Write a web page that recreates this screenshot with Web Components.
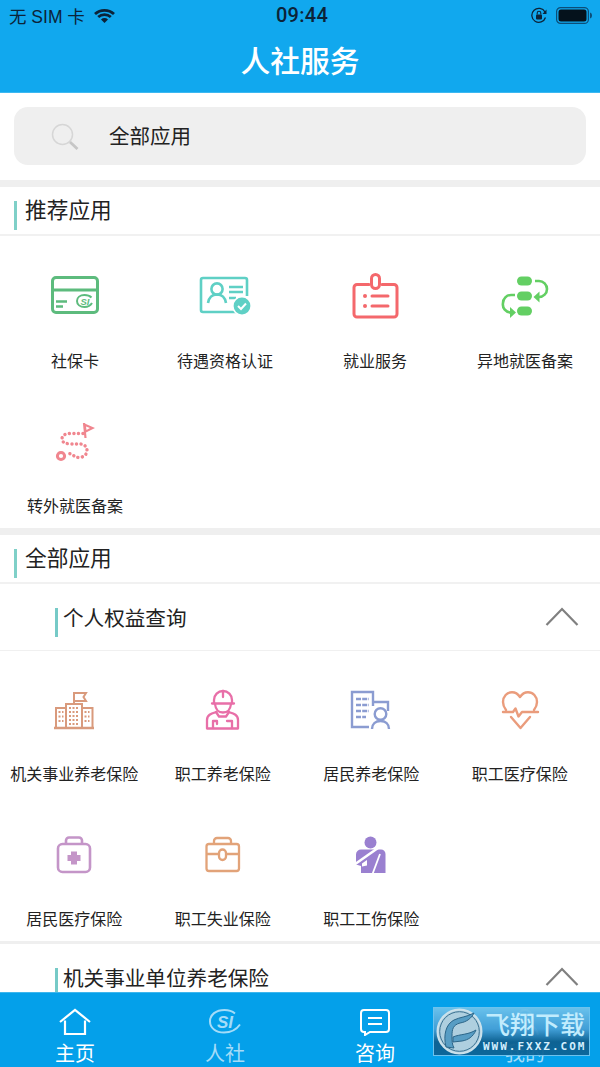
<!DOCTYPE html>
<html lang="zh"><head><meta charset="utf-8"><title>人社服务</title>
<style>
html,body{margin:0;padding:0;background:#fff}
body{width:600px;height:1067px;overflow:hidden;font-family:"Noto Sans CJK SC","Liberation Sans",sans-serif;color:#222}
</style></head><body>
<app-shell>
  <nav-header slot="head"></nav-header>
  <search-box>全部应用</search-box>
  <band-gap></band-gap>
  <section-title>推荐应用</section-title>
  <app-grid>
    <app-item label="社保卡" icon="card"></app-item>
    <app-item label="待遇资格认证" icon="idcheck"></app-item>
    <app-item label="就业服务" icon="badge"></app-item>
    <app-item label="异地就医备案" icon="transfer"></app-item>
    <app-item label="转外就医备案" icon="route"></app-item>
  </app-grid>
  <band-gap></band-gap>
  <section-title>全部应用</section-title>
  <sub-title>个人权益查询</sub-title>
  <app-grid narrow>
    <app-item label="机关事业养老保险" icon="office"></app-item>
    <app-item label="职工养老保险" icon="worker"></app-item>
    <app-item label="居民养老保险" icon="resident"></app-item>
    <app-item label="职工医疗保险" icon="heart"></app-item>
    <app-item label="居民医疗保险" icon="kit"></app-item>
    <app-item label="职工失业保险" icon="case"></app-item>
    <app-item label="职工工伤保险" icon="injury"></app-item>
  </app-grid>
  <band-gap thin></band-gap>
  <sub-title>机关事业单位养老保险</sub-title>
  <tab-bar slot="foot"></tab-bar>
</app-shell>
<script>
const ICONS={
card:`<g fill="none" stroke="#5dbb7d" stroke-width="3"><rect x="7.5" y="11.5" width="45" height="35" rx="3.5"/><path d="M7 24h46"/></g><path d="M11 35.5h11M11 40.5h7" stroke="#5dbb7d" stroke-width="2.6"/><path d="M46.500 31.500C45 30 42.500 29 39.500 29c-4.500 0-7.500 2.500-7.500 6s3 6 7.500 6c3.500 0 6-1.500 7.500-4" fill="none" stroke="#5dbb7d" stroke-width="2"/><text x="40" y="38.500" font-family="Liberation Sans" font-size="9.500" font-weight="700" font-style="italic" text-anchor="middle" fill="#5dbb7d">SI</text>`,
idcheck:`<g fill="none" stroke="#5fd0c5" stroke-width="2.6"><path d="M42 46H8a2 2 0 0 1-2-2V14a2 2 0 0 1 2-2h42a2 2 0 0 1 2 2v16"/><circle cx="22" cy="23" r="5.6"/><path d="M13 37c1-6 4.500-8.500 9-8.500s8 2.500 9 8.500"/><path d="M34 21h14M34 26h14M34 32h7"/></g><circle cx="47" cy="40" r="10" fill="#fff"/><circle cx="47" cy="40" r="8.400" fill="#5fd0c5"/><path d="M43 40l3 3 5-5.500" fill="none" stroke="#fff" stroke-width="2"/>`,
badge:`<g fill="none" stroke="#f4686c" stroke-width="3" stroke-linecap="round"><path d="M24 18.500H12a3 3 0 0 0-3 3V48a3 3 0 0 0 3 3h37a3 3 0 0 0 3-3V21.500a3 3 0 0 0-3-3H37"/><rect x="26.500" y="8.500" width="8" height="14" rx="4"/><path d="M27 30h16M27 40h16"/></g><circle cx="20" cy="30" r="2" fill="#f4686c"/><circle cx="20" cy="40" r="2" fill="#f4686c"/>`,
transfer:`<g fill="#63cf63"><rect x="22" y="10.500" width="15" height="9" rx="4.500"/><rect x="22" y="25.500" width="15" height="9" rx="4.500"/><rect x="22" y="40.500" width="15" height="9" rx="4.500"/><path d="M38.500 31l6-5.500v11z"/><path d="M21 46.500l-6-5.500v11z"/></g><g fill="none" stroke="#63cf63" stroke-width="2.600"><path d="M40 15h4a8 8 0 0 1 8 8 8 8 0 0 1-8 8h-1"/><path d="M20 29h-4a8 8 0 0 0-8 8 8 8 0 0 0 8 9.500"/></g>`,
route:`<path d="M38 22.500H25c-4.500 0-8 2-8 5.500s3.500 4.500 8 5h10c4 0 7 2.500 7 6.500s-3.500 7-8 7c-5 0-6-4-11-4" fill="none" stroke="#f0868f" stroke-width="3.400" stroke-dasharray=".1 4.400" stroke-linecap="round"/><circle cx="16" cy="45" r="3.600" fill="none" stroke="#f0868f" stroke-width="3"/><path d="M38.500 12L50 17l-10 5z" fill="#f0868f"/><path d="M39 12l1.500 15" stroke="#f0868f" stroke-width="2.200"/><path d="M41 15.500l4 1.500-3.500 2z" fill="#fff"/>`,
office:`<g fill="none" stroke="#d99a7c" stroke-width="2"><path d="M12 29h10v20H12zM22 25h16v24H22zM38 29h10.500v20H38z"/><path d="M30 25V14h12l-2.500 4 2.500 4H30"/></g><path d="M14.500 33h5M14.500 37.500h5M14.500 42h5M40.500 33h5M40.500 37.500h5M40.500 42h5M25 29h10M25 33h10M25 37h10M25 41h10M25 45h10" stroke="#d99a7c" stroke-width="2" stroke-dasharray="2 1.500"/><path d="M10 49h40" stroke="#d99a7c" stroke-width="2.500"/>`,
worker:`<g fill="none" stroke="#e86fa8" stroke-width="2.300" stroke-linecap="round" stroke-linejoin="round"><path d="M21 24v-3a9 9 0 0 1 18 0v3"/><path d="M19 24.500h22"/><path d="M30 12v6"/><path d="M22 25c.5 5 3.500 8.500 8 8.500s7.500-3.500 8-8.500"/><path d="M23.500 33c-5 1.500-9.500 2.500-9.500 8v8.500h31V41c0-5.500-4.500-6.500-9.500-8"/><path d="M23 33l3 4.500h7l3-4.500M20 49v-7h4v3M39 49v-7h-5"/></g>`,
resident:`<g fill="none" stroke="#8b9cd1" stroke-width="2.400"><path d="M28 48H11V13h21v14"/><path d="M32 23h15v9"/><circle cx="39.500" cy="35" r="5.800"/><path d="M31 50c0-5 3.500-8 8.500-8s8.500 3 8.500 8"/></g><path d="M15 20h13M15 26h13M15 32h13M15 38h10" stroke="#8b9cd1" stroke-width="2.400" stroke-dasharray="5 1.200"/>`,
heart:`<g fill="none" stroke="#ea9c7c" stroke-width="2.400" stroke-linecap="round" stroke-linejoin="round"><path d="M16 31c-1.800-2.300-3-5-3-8 0-5.500 4-9.800 9-9.800 3.300 0 6 1.700 8 4.800 2-3.100 4.700-4.800 8-4.800 5 0 9 4.300 9 9.800 0 3-1.200 5.700-3 8"/><path d="M13 33h10l2.500-3.500 3 8 3.500-4.500h16"/><path d="M21 38l9.500 11 9.500-11"/></g>`,
kit:`<g fill="none" stroke="#c495c8" stroke-width="2.600"><rect x="14" y="20" width="32" height="28" rx="4.500"/><path d="M22 20v-3.500a3 3 0 0 1 3-3h10a3 3 0 0 1 3 3V20"/></g><path d="M27 27.500h6V31h3.500v6H33v3.500h-6V37h-3.500v-6H27z" fill="#c495c8"/>`,
case:`<g fill="none" stroke="#e2a379" stroke-width="2.300"><rect x="13.500" y="20" width="32.500" height="27" rx="2.500"/><path d="M21 20v-3a3 3 0 0 1 3-3h11a3 3 0 0 1 3 3v3M13.500 30H26M33 30h13"/><rect x="26" y="25.500" width="7" height="10.500" rx="3.500"/></g>`,
injury:`<circle cx="29.500" cy="18.500" r="6" fill="#9a80d0"/><path d="M20 25.500h20a4.500 4.500 0 0 1 4.500 4.500v19H20v-7l-5 -1.500V30.500a5 5 0 0 1 5-5z" fill="#9a80d0"/><path d="M37 24L13.500 40.500" stroke="#fff" stroke-width="2.600"/><path d="M39 30L31.500 50" stroke="#fff" stroke-width="1.800"/><path d="M21 39.500l5-3.500v5.500l-5 1z" fill="#fff"/>`
};
function def(name,html,init){
  customElements.define(name,class extends HTMLElement{
    constructor(){super();this.attachShadow({mode:"open"});}
    connectedCallback(){this.shadowRoot.innerHTML=html(this);if(init)init(this);}
  });
}
def("app-shell",()=>`<style>
:host{display:flex;flex-direction:column;width:600px;height:1067px;position:relative;overflow:hidden;background:#fff}
main{flex:1;min-height:0;overflow:hidden;display:flex;flex-direction:column}
</style><slot name="head"></slot><main><slot></slot></main><slot name="foot"></slot>`);
def("nav-header",()=>`<style>
:host{display:block;background:#11a8ee;height:93px;color:#fff;box-sizing:border-box;border-bottom:1px solid #3cb8f1;flex:none}
.status{display:flex;align-items:center;height:30px;padding:0 8px 0 9px;color:#0c2338;font:17.500px "Liberation Sans","Noto Sans CJK SC",sans-serif}
.left{display:flex;align-items:center;gap:9px;flex:1}
.time{font:500 20px Roboto,"Liberation Sans",sans-serif;letter-spacing:.3px;margin-left:3px}
.right{flex:1;display:flex;justify-content:flex-end;align-items:center;gap:9px}
h1{margin:0;text-align:center;font:500 29.800px/38px "Noto Sans CJK SC",sans-serif;padding-top:10px}
</style><div class="status"><div class="left"><span>无 SIM 卡</span><svg width="21" height="15" viewBox="0 0 21 15"><path d="M1 6a14 14 0 0 1 19 0M4.200 9a9.500 9.500 0 0 1 12.600 0" fill="none" stroke="#0c2338" stroke-width="2.800"/><path d="M7 11.500a5 5 0 0 1 7 0L10.500 15z" fill="#0c2338"/></svg></div>
<span class="time">09:44</span>
<div class="right"><svg width="16" height="17" viewBox="0 0 16 17"><path d="M14.500 10.500A7 7 0 1 1 14 5" fill="none" stroke="#0c2338" stroke-width="1.300"/><path d="M15.500 2.500V7h-4z" fill="#0c2338"/><rect x="5" y="7.500" width="6" height="5" rx="1" fill="#0c2338"/><path d="M6.200 7.500V6a1.800 1.800 0 0 1 3.600 0v1.500" fill="none" stroke="#0c2338" stroke-width="1.100"/></svg>
<svg width="36" height="17" viewBox="0 0 36 17"><rect x=".6" y=".6" width="31.800" height="15.800" rx="4" fill="none" stroke="#0c4e78" stroke-width="1.200"/><rect x="2.500" y="2.500" width="28" height="12" rx="2.500" fill="#05121c"/><path d="M34 5.500c1.300.3 2 1.500 2 3s-.7 2.700-2 3z" fill="#0c4e78"/></svg></div></div>
<h1>人社服务</h1>`);
def("search-box",()=>`<style>
:host{display:block;padding:14px 14px 15px;flex:none}
.pill{height:58px;background:#efefef;border-radius:14px;display:flex;align-items:center;font-size:20.500px;color:#222}
svg{margin:0 30px 0 37px;flex:none}
span{margin-bottom:2px}
</style><div class="pill"><svg width="28" height="27" viewBox="0 0 28 27"><circle cx="11.500" cy="11.500" r="10" fill="none" stroke="#d6d6d6" stroke-width="1.500"/><path d="M19 19l7.500 7" stroke="#c6c6c6" stroke-width="2.800"/></svg><span><slot></slot></span></div>`);
def("band-gap",el=>`<style>:host{display:block;height:${el.hasAttribute("thin")?3:7}px;background:#efefef;flex:none}</style>`);
def("section-title",()=>`<style>
:host{display:flex;align-items:center;height:49px;box-sizing:border-box;border-bottom:2px solid #f1f1f1;padding-left:14px;font-size:21.700px;color:#222;flex:none}
i{width:3px;height:29px;background:#7fd0c8;margin:10px 8px 0 0;display:block}
span{margin-bottom:4px}
</style><i></i><span><slot></slot></span>`);
def("sub-title",()=>`<style>
:host{display:flex;align-items:center;height:67px;box-sizing:border-box;border-bottom:1px solid #f0f0f0;padding:0 21px 0 55px;font-size:20.600px;color:#222;flex:none}
i{width:3px;height:29px;background:#76cac7;margin:11px 6px 0 0;display:block;flex:none}
span{flex:1;margin-left:-1px}
</style><i></i><span><slot></slot></span><svg width="34" height="20" viewBox="0 0 34 20"><path d="M1.500 18L17 2l15.500 16" fill="none" stroke="#808080" stroke-width="2.200"/></svg>`);
def("app-grid",el=>`<style>
:host{display:grid;grid-template-columns:repeat(4,1fr);flex:none;width:${el.hasAttribute("narrow")?594:600}px;padding-top:${el.hasAttribute("narrow")?0:2}px}
</style><slot></slot>`);
def("app-item",el=>`<style>
:host{display:flex;flex-direction:column;align-items:center;height:145px;box-sizing:border-box;padding-top:28px}
svg{display:block;flex:none}
span{font-size:16px;line-height:22px;margin-top:23px;white-space:nowrap;color:#222}
</style><svg width="60" height="60" viewBox="0 0 60 60">${ICONS[el.getAttribute("icon")]}</svg><span>${el.getAttribute("label")}</span>`);
def("tab-bar",()=>`<style>
:host{display:block;height:75px;background:#04a0ea;border-top:1px solid #3db6ee;box-sizing:border-box;position:relative;flex:none}
.tabs{display:grid;grid-template-columns:repeat(4,1fr);height:100%}
.tab{display:flex;flex-direction:column;align-items:center;color:#fff;font-size:20px;line-height:22px;padding-top:15px;box-sizing:border-box}
.tab svg{display:block;height:28px;flex:none}
.tab span{margin-top:6px}
.dim{color:#a5dcf8}
.mark{position:absolute;left:433px;top:14px;width:157px;height:49px;box-sizing:border-box;border:1px solid #74c5ee;background:linear-gradient(#6fc3ec,#459fd6 45%,#0f5f8e 72%,#0d6497);display:flex;opacity:.94}
.logo{flex:none;margin:0 0 0 2px}
.wm{flex:1;min-width:0;padding:1px 0 0 2px}
.big{font:500 25px/29px "Noto Sans CJK SC",sans-serif;white-space:nowrap;color:#cdf1ff}
.url{font:700 11px/13px "DejaVu Sans Mono","Liberation Mono",monospace;color:#dff3ff;letter-spacing:2px;white-space:nowrap;margin:2px 0 0 -2px}
</style><div class="tabs">
<div class="tab"><svg width="34" height="28" viewBox="0 0 34 28"><path d="M2 14L17 2l15 12" fill="none" stroke="#fff" stroke-width="2.200"/><path d="M7 12.500V26h20V12.500" fill="none" stroke="#fff" stroke-width="2.200"/></svg><span>主页</span></div>
<div class="tab dim"><svg width="34" height="28" viewBox="0 0 34 28"><path d="M27 5.500C24 3 20.500 2 16.500 2 8 2 2 6.500 2 13.500 2 20 8 24.500 16 24.500c7 0 12.500-3 16-8" fill="none" stroke="#a5dcf8" stroke-width="2"/><text x="17" y="19.500" font-family="Liberation Sans" font-size="17" font-weight="700" font-style="italic" text-anchor="middle" fill="#a5dcf8">SI</text></svg><span>人社</span></div>
<div class="tab"><svg width="32" height="28" viewBox="0 0 32 28"><path d="M5 2h22a3 3 0 0 1 3 3v16a3 3 0 0 1-3 3H11l-5 3v-3H5a3 3 0 0 1-3-3V5a3 3 0 0 1 3-3z" fill="none" stroke="#fff" stroke-width="2"/><path d="M9 10h14M9 16h14" stroke="#fff" stroke-width="2"/></svg><span>咨询</span></div>
<div class="tab dim"><svg width="32" height="28" viewBox="0 0 32 28"><circle cx="16" cy="9" r="7" fill="none" stroke="#a5dcf8" stroke-width="2"/><path d="M3 27c1-7 6-10 13-10s12 3 13 10" fill="none" stroke="#a5dcf8" stroke-width="2"/></svg><span>我的</span></div>
</div>
<div class="mark"><svg class="logo" width="47" height="47" viewBox="0 0 47 47"><circle cx="23.500" cy="23.500" r="22" fill="#b9d2df" stroke="#d8e6ec" stroke-width="2"/><circle cx="23.500" cy="23.500" r="19.800" fill="none" stroke="#3e6f8c" stroke-width="1"/><path d="M10 39c-3-12 0-23 8-27 6-3 13-3 20-7-3 6-8 9-14 10-7 2-8 6-8 13 0 5 0 8 2 12z" fill="#5d9dc2" stroke="#2f6383" stroke-width="1"/><path d="M17 29c7-3 15-2 23-7-3 7-8 10-14 11l-9 1z" fill="#5d9dc2" stroke="#2f6383" stroke-width="1"/></svg>
<div class="wm"><div class="big">飞翔下载</div><div class="url">WWW.FXXZ.COM</div></div></div>`);
</script></body></html>
